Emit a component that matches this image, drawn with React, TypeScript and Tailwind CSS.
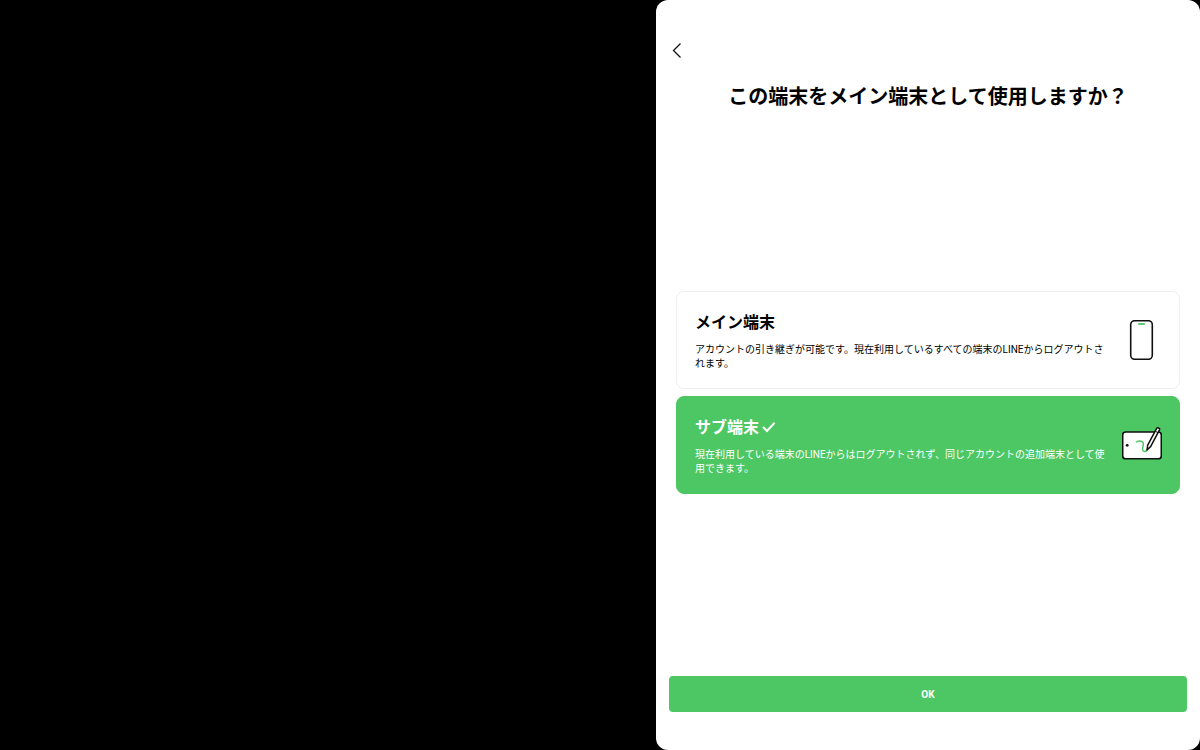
import React, { useState } from 'react';

type Device = 'main' | 'sub';

const PhoneIcon = () => (
  <svg width="40" height="40" viewBox="0 0 40 40" fill="none" aria-hidden="true">
    <rect x="8.7" y="0.7" width="21.6" height="38.6" rx="4" fill="#fff" stroke="#111" strokeWidth="1.6" />
    <path d="M16.200 4h6.600" stroke="#4dc764" strokeWidth="1.8" />
  </svg>
);

const TabletIcon = () => (
  <svg width="40" height="40" viewBox="0 0 40 40" fill="none" aria-hidden="true">
    <rect x="0.7" y="7" width="38.6" height="26.800" rx="3" fill="#fff" stroke="#111" strokeWidth="1.6" />
    <circle cx="5.2" cy="20.300" r="1.400" fill="#111" />
    <path d="M14 17.300c1.300-1.500 6.300-2.200 7.200 0.800 0.800 2.800-1.800 5.400-0.200 7.400 1.200 1.400 3.200 1.200 4.300-0.200" stroke="#4dc764" strokeWidth="1.5" />
    <path d="M25 25l0.700-4.800L34.800 3.200c0.700-1.200 3.400 0.200 2.800 1.500L28.600 21.600z" fill="#fff" stroke="#111" strokeWidth="1.500" strokeLinejoin="round" />
    <path d="M33.300 6.200l2.800 1.500" stroke="#111" strokeWidth="1" />
  </svg>
);

const OPTIONS: { id: Device; title: string; text: string; icon: React.ReactNode }[] = [
  {
    id: 'main',
    title: 'メイン端末',
    text: 'アカウントの引き継ぎが可能です。現在利用しているすべての端末のLINEからログアウトされます。',
    icon: <PhoneIcon />,
  },
  {
    id: 'sub',
    title: 'サブ端末',
    text: '現在利用している端末のLINEからはログアウトされず、同じアカウントの追加端末として使用できます。',
    icon: <TabletIcon />,
  },
];

const App: React.FC = () => {
  const [selected, setSelected] = useState<Device>('sub');

  return (
    <div className="grid min-h-screen grid-cols-[41fr_34fr] bg-black font-[Roboto,'Noto_Sans_CJK_JP',sans-serif]" lang="ja">
      <main className="col-start-2 flex flex-col rounded-xl bg-white text-black">
        <header className="pt-10">
          <button type="button" aria-label="戻る" className="ml-3 flex h-5 w-5 items-center justify-center">
            <svg width="20" height="20" viewBox="0 0 20 20" fill="none" aria-hidden="true">
              <path d="M12.500 3.500L5.500 10.500l7 7" stroke="#111" strokeWidth="1.3" />
            </svg>
          </button>
          <h1 className="mt-[26px] text-center text-xl leading-[22px] font-bold">
            この端末をメイン端末として使用しますか？
          </h1>
        </header>

        {/* Device choice */}
        <fieldset className="flex flex-1 flex-col justify-center gap-[7px] px-5">
          {OPTIONS.map((option) => {
            const active = option.id === selected;
            return (
              <label
                key={option.id}
                className={`flex cursor-pointer items-center justify-between rounded-lg border pt-[19px] pr-[17px] pb-[17px] pl-[18px] ${
                  active ? 'border-[#4dc764] bg-[#4dc764] text-white' : 'border-[#efefef] bg-white text-black'
                }`}
              >
                <input
                  type="radio"
                  name="device"
                  value={option.id}
                  checked={active}
                  onChange={() => setSelected(option.id)}
                  className="sr-only"
                />
                <span className="block w-[412px]">
                  <span className="flex items-center gap-[3px] text-base leading-6 font-bold">
                    {option.title}
                    {active && (
                      <svg width="14" height="14" viewBox="0 0 14 14" fill="none" aria-hidden="true">
                        <path d="M1 6l4 4L12.600 1.800" stroke="#fff" strokeWidth="2" />
                      </svg>
                    )}
                  </span>
                  <span className="mt-2 block text-[10px] leading-[14px]">{option.text}</span>
                </span>
                <span className="shrink-0 pb-0.5">{option.icon}</span>
              </label>
            );
          })}
        </fieldset>

        <footer className="px-[13px] pb-[38px]">
          <button type="button" className="h-9 w-full rounded bg-[#4dc764] text-[10px] font-bold text-white">
            OK
          </button>
        </footer>
      </main>
    </div>
  );
};

export default App;
